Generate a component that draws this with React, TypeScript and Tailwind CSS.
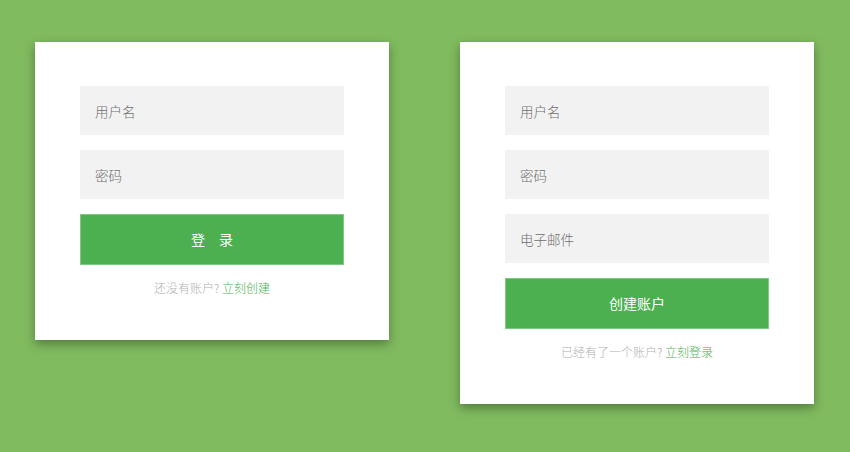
import React from "react";

interface FormCardProps {
  fields: string[];
  buttonLabel: string;
  promptText: string;
  linkText: string;
  wideButton?: boolean;
}

function FormCard({ fields, buttonLabel, promptText, linkText, wideButton }: FormCardProps) {
  return (
    <div className="w-[354px] bg-white px-[45px] pt-[44px] pb-[44px] shadow-[0_4px_10px_rgba(0,0,0,0.35)]">
      <form className="flex flex-col gap-[15px]" onSubmit={(e) => e.preventDefault()}>
        {fields.map((field) => (
          <input
            key={field}
            type="text"
            placeholder={field}
            className="h-[49px] w-full bg-[#f2f2f2] px-[15px] text-[13.5px] font-light text-[#555] outline-none placeholder:text-[#6f6f6f]"
          />
        ))}
        <button
          type="submit"
          className={`h-[51px] w-full border border-[#7fc983] bg-[#4caf50] text-[14px] text-white ${
            wideButton ? "tracking-[1em] pl-[1em]" : ""
          }`}
        >
          {buttonLabel}
        </button>
      </form>
      <p className="mt-[15px] text-center text-[12px] font-light leading-[16px] text-[#b0b0b0]">
        {promptText}
        <a href="#" className="text-[#4caf50]">
          {linkText}
        </a>
      </p>
    </div>
  );
}

export default function App() {
  return (
    <div
      className="grid h-[452px] w-[850px] grid-cols-2 items-start bg-[#80bb5f] pt-[42px]"
      style={{ fontFamily: '"Noto Sans CJK SC", "Noto Sans", sans-serif' }}
    >
      <div className="flex justify-center pr-[1px]">
        <FormCard
          fields={["用户名", "密码"]}
          buttonLabel="登录"
          promptText="还没有账户? "
          linkText="立刻创建"
          wideButton
        />
      </div>
      <div className="flex justify-center pr-[1px]">
        <FormCard
          fields={["用户名", "密码", "电子邮件"]}
          buttonLabel="创建账户"
          promptText="已经有了一个账户? "
          linkText="立刻登录"
        />
      </div>
    </div>
  );
}
